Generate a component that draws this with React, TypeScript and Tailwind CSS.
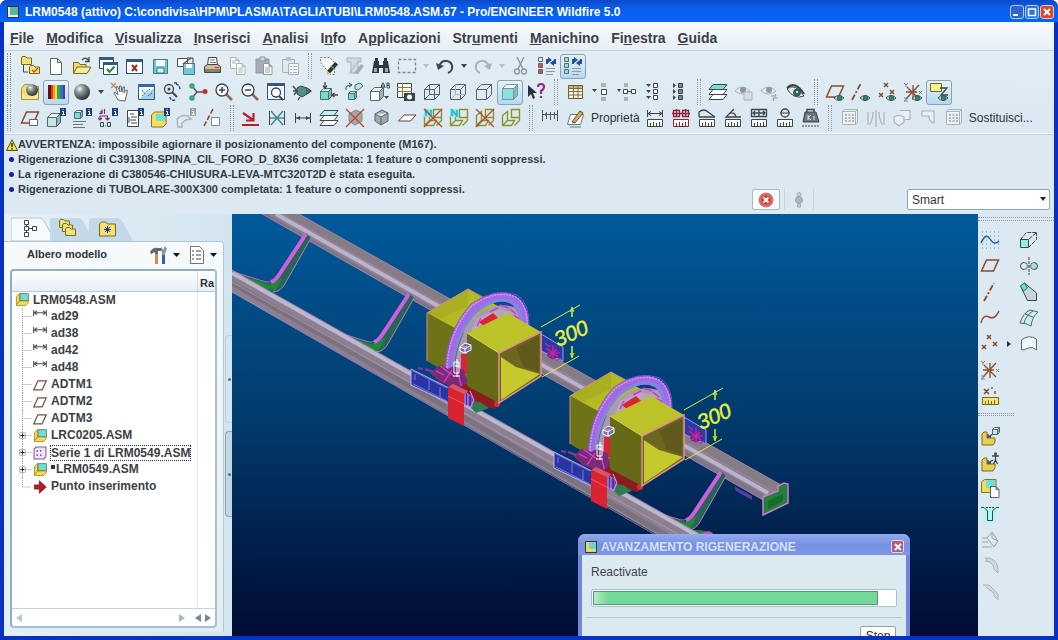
import type { ReactNode } from "react";

const K = "#3c464c";
const G = "#a9b3b8";
const T = "#6fe0d8";

type LineProps = { d: string; c?: string; f?: string; w?: number; dash?: string };
const L = ({ d, c = K, f = "none", w = 1, dash }: LineProps) => (
  <path d={d} stroke={c} fill={f} strokeWidth={w} strokeDasharray={dash} />
);

const Cube = ({ x, y, s, c = "#56686e", f = T, t = "#e4fbf9" }: { x: number; y: number; s: number; c?: string; f?: string; t?: string }) => {
  const o = Math.round(s / 2.5);
  return (
    <g stroke={c} transform={`translate(${x + 0.5} ${y + 0.5})`}>
      <path d={`M0 ${o}L${o} 0H${s + o}L${s} ${o}Z`} fill={t} />
      <path d={`M${s} ${o}L${s + o} 0V${s}L${s} ${s + o}Z`} fill="#8fb6bb" />
      <path d={`M0 ${o}H${s}V${s + o}H0Z`} fill={f} />
    </g>
  );
};
const Info = ({ c = "#1c3f78" }: { c?: string }) => (
  <g>
    <path d="M14 0h6v8h-6z" fill={c} />
    <path d="M17 1v1M16 3.500h1.500V7M16 6.500h3" stroke="#fff" fill="none" />
  </g>
);
const Eye = ({ c = "#3a5a50", i = "#2b8a74" }: { c?: string; i?: string }) => (
  <g>
    <path d="M9 16q5-5 10 0q-5 5-10 0z" fill="#dfe9e4" stroke={c} />
    <circle cx="14.5" cy="16" r="2.4" fill={i} stroke={c} />
  </g>
);
const Ruler = ({ c = K }: { c?: string }) => (
  <g stroke={c}>
    <path d="M2.500 11.500h15v7h-15z" fill="#fbfbf4" />
    <path d="M5.500 18v-3M8.500 18v-4M11.500 18v-3M14.500 18v-4" />
  </g>
);
const Folder = ({ x, y }: { x: number; y: number }) => (
  <path transform={`translate(${x} ${y})`} d="M.5 2l1-1.500h3L6 2h4.500v6.500H.5z" fill="#f3e27a" stroke="#7a6a1c" />
);
const Asm = () => (
  <g>
    <path d="M2 5l4-4h13v13l-4 4H2z" fill="#f6d94e" stroke="#8a7420" />
    <path d="M7 1h12v10H7z" fill={T} stroke="#4a8a80" />
    <path d="M7 1v10l-5 6M7 11h12" stroke="#8a7420" fill="none" />
  </g>
);
const Lens = ({ children }: { children?: ReactNode }) => (
  <g>
    <path d="M12 12l6 6" stroke="#8b6a5a" strokeWidth="2.500" />
    <circle cx="8" cy="8" r="6" fill="#f4f9fb" stroke={K} strokeWidth="1.300" />
    {children}
  </g>
);
const WireBox = ({ hidden, solid }: { hidden?: boolean; solid?: boolean }) => (
  <g fill="none" stroke="#566067">
    <path d="M2.500 7.500h10v10h-10zM2.500 7.500l5-5h10v10l-5 5M12.500 7.500l5-5" />
    {!solid && <path d="M7.500 2.500v10h10M7.500 12.500l-5 5" stroke={hidden ? G : "#566067"} />}
  </g>
);
const Frame3 = ({ n, x }: { n?: boolean; x?: boolean }) => (
  <g fill="none">
    <path d="M1.500 7.500l5-4v9h7l-3 5h-9zM6.500 12.500l-5 5M10.500 1.500h8v8h-8zM18.500 9.500v3l-5 5" stroke="#8a942c" strokeWidth="1.400" />
    {n && <path d="M1 1h9v8H1z" fill="#7fe9f2" />}
    {n && <path d="M3 8V2l5 6V2" stroke="#1fb4cc" strokeWidth="1.500" />}
    {x && <path d="M1 1l18 18M19 1L1 19" stroke="#c4432c" strokeWidth="1.300" />}
  </g>
);
const Plane = ({ c = "#8a4b2a" }: { c?: string }) => <path d="M1.500 15L6.500 4h12l-5 11z" fill="none" stroke={c} strokeWidth="1.500" />;
const Axis = () => <path d="M4 19L14 1" stroke="#8a4b2a" strokeWidth="1.800" strokeDasharray="6 2 2 2" />;
const Crosses = () => <path d="M7 1l4 4M11 1L7 5M2 11l4 4M6 11l-4 4M13 8l4 4M17 8l-4 4" stroke="#8a4b2a" strokeWidth="1.500" />;
const Csys = () => (
  <g fill="none">
    <path d="M10 3v15M3 17L16 3M4 5l12 12M3 10h11" stroke="#8a4b2a" strokeWidth="1.300" />
    <path d="M1 1l2 2 2-2M3 3v2M16 9l3 3M19 9l-3 3M1 16h4l-4 3h4" stroke="#7a8388" />
  </g>
);
const Check = ({ x, y }: { x: number; y: number }) => (
  <path d={`M${x} ${y}l2.500 3 5-5.500`} stroke="#2c8a3c" strokeWidth="2" fill="none" />
);
const Leaves = ({ c = K, f = T }: { c?: string; f?: string }) => (
  <g stroke={c}>
    <path d="M1 17.500l4-5h14l-4 5z" fill="#fff" />
    <path d="M1 12.500l4-5h14l-4 5z" fill="#fff" />
    <path d="M1 7.500l4-5h14l-4 5z" fill={f} />
  </g>
);
const Grid3 = () => (
  <g>
    <path d="M2.500 3.500h13v13h-13zM15.500 3.500l2-2v13l-2 2M2.500 3.500l2-2h13" fill="#eef3f6" stroke={G} />
    <path d="M5 7h9M5 10h9M5 13h9" stroke={G} strokeDasharray="2 1.500" strokeWidth="2" />
  </g>
);
const Refresh = ({ boxes }: { boxes: [string, string, string] }) => (
  <g>
    <path d="M1.500 1.500h4v4h-4z" fill={boxes[0]} stroke="#5a6a70" />
    <path d="M1.500 7.500h4v4h-4z" fill={boxes[1]} stroke="#5a6a70" />
    <path d="M1.500 13.500h4v4h-4z" fill={boxes[2]} stroke="#5a6a70" />
    <path d="M10 8V4h2M18 3v4h-2" stroke="#214f9c" strokeWidth="2" fill="none" />
    <path d="M11 1l4 3-4 3zM17 4l-4 3 4 3z" fill="#214f9c" />
    <path d="M9 12.500h9M9 15.500h9M9 18.500h7" stroke="#8d979c" />
  </g>
);
const LBlock = () => (
  <path d="M2 8l2-2h3v6h8v4l-2 3H2z" fill="#e9cf52" stroke="#7a6a1c" />
);
const Sheet = ({ x = 0, y = 0, c = "#5c666c" }: { x?: number; y?: number; c?: string }) => (
  <path transform={`translate(${x} ${y})`} d="M.5.5H6l3 3v8H.5zM6 .5v3h3" fill="#fff" stroke={c} />
);

const icons: Record<string, ReactNode> = {
  workdir: (<><Folder x={1} y={0} /><L d="M3.500 9v7H8" /><Folder x={9} y={9} /><path d="M12 14l2 2 4-4" stroke="#c2502c" strokeWidth="1.500" fill="none" /></>),
  new: <path d="M4.500 2.500h7l4 4v12h-11zM11.500 2.500v4h4" fill="#fff" stroke="#5c666c" />,
  open: (<><path d="M1.500 17V6.500h5l1.500 2h6V11" fill="#f0dc74" stroke="#7a6a1c" /><path d="M1.500 17.500L5 11h14l-4 6.500z" fill="#f7ea9c" stroke="#7a6a1c" /><L d="M10 4q4-4 7 1M17 1v4.500h-4" w={1.300} /></>),
  winCheck: (<><path d="M1.500 1.500h14v11h-14z" fill="#fff" stroke="#2c4a6c" /><path d="M1 1h15v3H1z" fill="#35597f" /><path d="M5.500 6.500h14v12h-14z" fill="#fff" stroke="#2c4a6c" /><path d="M5 6h15v3H5z" fill="#35597f" /><Check x={9} y={13} /></>),
  winClose: (<><path d="M2.500 3.500h16v14h-16z" fill="#fff" stroke="#2c4a6c" /><path d="M2 3h17v3H2z" fill="#35597f" /><path d="M8 9l5 6M13 9l-5 6" stroke="#9c2c2c" strokeWidth="2" /></>),
  save: (<><path d="M3.500 3.500h14v14h-14z" fill="#73c9cb" stroke="#3f7d88" /><path d="M6 4h9v6H6z" fill="#f4fbfb" /><path d="M7 12h7v5H7z" fill="#dceef0" stroke="#3f7d88" /></>),
  saveCopy: (<><path d="M1.500 2.500h10v8h-10z" fill="#fff" stroke="#46525a" /><path d="M7.500 7.500h11v11h-11z" fill="#73c9cb" stroke="#3f7d88" /><path d="M10 8h6v4h-6z" fill="#fff" /><path d="M7 8l8-6" stroke="#a83434" strokeWidth="1.300" /><L d="M11 2h6v5" /></>),
  print: (<><path d="M6.500 1.500h8l1 8h-10z" fill="#fff" stroke={K} /><L d="M8 4h5M8 6.500h6" c="#778" /><path d="M2.500 10.500l3-2h10l3 2v6h-16z" fill="#cdbb9d" stroke={K} /><path d="M3 13h15v3H3z" fill="#8b7c68" /><path d="M13 11h4v1h-4z" fill="#d33" /></>),
  copy: (<><Sheet x={2} y={1} c={G} /><Sheet x={8} y={7} c={G} /><L d="M4 5h4M4 7h4M10 12h5M10 14h5M10 16h5" c={G} /></>),
  paste: (<><path d="M2 3h13v14H2z" fill="#a5afb3" stroke="#8d979c" /><path d="M6 1h5v4H6z" fill="#d3dadd" stroke="#8d979c" /><Sheet x={9} y={7} c="#8d979c" /><L d="M11 12h5M11 14h5M11 16h5" c="#9aa4a9" /></>),
  pasteSp: (<><path d="M2.500 3.500h12v13h-12z" fill="#e2e8eb" stroke={G} /><path d="M6 1h5v4H6z" fill="#b8c1c5" /><path d="M8.500 7.500h10v11h-10z" fill="#f4f7f8" stroke={G} /><L d="M10 10.500h2M13 10.500h4M10 13.500h2M13 13.500h4M10 16.500h2M13 16.500h4" c={G} /></>),
  regen: (<><path d="M1.500 1.500h9l5 5v12h-4l-10-12z" fill="#f7f9f4" stroke="#6b757a" strokeDasharray="2 1.500" /><path d="M8 15l8-9 3 2.500-8 9z" fill="#2d3336" /><path d="M8 14.500l4 3.500-4 1z" fill="#d3c94e" /><path d="M12 10l4 3.500" stroke="#4da46a" strokeWidth="1.500" /></>),
  regenMgr: (<><path d="M2 2h14v4h-3v11H6V6H2z" fill="#d4dbde" stroke={G} /><path d="M9 17l7-9 3 2-6 8z" fill="#a5afb3" /><L d="M4 18L14 4" c={G} /></>),
  find: (<><path d="M3 5h5v4h4V5h5l2 12h-7v-5H8v5H1z" fill="#30383d" /><path d="M4 2h3v3H4zM13 2h3v3h-3z" fill="#30383d" /><path d="M3 12h3v4H3zM14 12h3v4h-3z" fill="#8fb0ae" /></>),
  selectBox: <L d="M1.500 3.500h17v13h-17z" c="#7c888e" w={1.300} dash="3 2" />,
  undo: (<><path d="M4 11q2-7 8-6q6 1 5 8q-1 3-4 4" fill="none" stroke="#3f4a50" strokeWidth="2" /><path d="M1 7l2 7 6-4z" fill="#3f4a50" /></>),
  redo: (<><path d="M16 11q-2-7-8-6q-6 1-5 8q1 3 4 4" fill="none" stroke={G} strokeWidth="2" /><path d="M19 7l-2 7-6-4z" fill={G} /></>),
  cut: (<><path d="M6 1l6 12M13 1L7 13" stroke="#8d979c" strokeWidth="1.500" /><circle cx="6" cy="15.500" r="2.500" fill="none" stroke="#8d979c" strokeWidth="1.300" /><circle cx="13" cy="15.500" r="2.500" fill="none" stroke="#8d979c" strokeWidth="1.300" /></>),
  tagA: <Refresh boxes={["#f3f3f3", "#d85050", "#d85050"]} />,
  tagB: <Refresh boxes={["#8fe0da", "#8fe0da", "#8fe0da"]} />,
  render: (<><path d="M1.500 17.500v-11l3-4h5l2 2h7v13z" fill="#f1de6c" stroke="#a8923c" /><circle cx="12" cy="8" r="6" fill="url(#ball)" /><path d="M2 12q6 4 16 1v4H2z" fill="#f6e98f" /></>),
  spectrum: (<><path d="M2 3h3v14H2z" fill="#5b1512" /><path d="M5 3h2v14H5z" fill="#e6392b" /><path d="M7 3h2v14H7z" fill="#f59b1f" /><path d="M9 3h2v14H9z" fill="#f0e22c" /><path d="M11 3h3v14h-3z" fill="#36a648" /><path d="M14 3h3v14h-3z" fill="#2378c8" /><path d="M17 3h2v14h-2z" fill="#65319a" /></>),
  ball: <circle cx="10" cy="10" r="8" fill="url(#ball)" />,
  hand: (<><path d="M1 1l5 5M6 1L1 6" stroke="#c78d52" strokeWidth="1.300" /><path d="M8 18L4 11l1-1 3 3L6 5l1.500-.5L10 10l-.5-6H11l1 6 1-5h1.500L14 11l2-3 1.500.5L16 15l-1 4z" fill="#fff" stroke="#59646a" /></>),
  orient: (<><path d="M2.500 2.500h16v15h-16z" fill="#f3f9fd" stroke="#2c5a8c" /><path d="M2 2h17v3H2z" fill="#3468a0" /><path d="M3 17L18 6v11z" fill="#a9cfe8" /><L d="M6 14l8-7M6 8l3 4M12 14l4-3" c="#2c5a8c" dash="2 1" /></>),
  layerFind: (<><circle cx="7" cy="7" r="4.500" fill="none" stroke={K} strokeWidth="1.300" /><circle cx="7" cy="7" r="1.500" fill={K} /><path d="M10 10l5 5" stroke={K} strokeWidth="2" /><path d="M14 2q4 1 4 6M8 15q0 4 6 3M12 1h4" stroke="#2a4fa8" fill="none" strokeWidth="1.500" strokeDasharray="3 1" /></>),
  nodes: (<><path d="M4 4l5 6 8 0M9 10l-5 6" stroke="#4b5a60" strokeWidth="1.500" fill="none" /><circle cx="4" cy="4" r="2.800" fill="#3aa67c" /><circle cx="4" cy="16" r="2.800" fill="#3aa67c" /><circle cx="17" cy="9.500" r="2.500" fill="#c43030" /></>),
  zoomIn: <Lens><path d="M5 8h6M8 5v6" stroke={K} strokeWidth="1.500" /></Lens>,
  zoomOut: <Lens><path d="M5 8h6" stroke={K} strokeWidth="1.500" /></Lens>,
  refit: (<><path d="M1.500 1.500h17v16h-17z" fill="#f3f7f9" stroke="#3a5a80" /><path d="M1 1h18v3H1z" fill="#35597f" /><circle cx="10" cy="10.500" r="4.500" fill="#fff" stroke={K} strokeWidth="1.300" /><path d="M13 14l4 4" stroke={K} strokeWidth="2" /></>),
  reorient: (<><path d="M1 9h18" stroke={K} strokeWidth="1.500" /><path d="M5 6l4-2 6 2v6l-5 3-5-3z" fill="#4f8f88" stroke={K} /><path d="M1 4l4 5-3 4M15 6l4 3-4 3M8 15l-2 3" stroke={K} fill="none" strokeWidth="1.300" /></>),
  saved: (<><Cube x={2} y={6} s={8} /><path d="M7 0v6M5 3.500l2 3 2-3M20 13h-6M16.500 11l-3 2 3 2" stroke={K} fill="none" strokeWidth="1.300" /></>),
  rotate: (<><Cube x={4} y={9} s={6} /><path d="M2 8q-1-5 5-5M5 1l3 2-3 2" stroke={K} fill="none" /><path d="M11 3l5-2 3 3-5 4-3-1z" fill="#b4ecdf" stroke="#56686e" /></>),
  named: (<><Cube x={0} y={5} s={9} f="#fff" c="#5c666c" /><path d="M11 6l1.500-5h1L15 6M11.500 4h3M17 1v5M17 1h2v2.500h-2M19.500 3.500V6h-2" stroke={K} fill="none" /><path d="M14 14h5l-2.500 3z" fill={K} /></>),
  viewMgr: (<><path d="M1.500 1.500h14v14h-14z" fill="#fbf8ec" stroke={K} /><L d="M1 5.500h15M1 9.500h15M6.500 1v14" c="#857a5c" /><path d="M8 11h11v8H8z" fill="#39434a" /><circle cx="13.500" cy="15" r="2.500" fill="#fff" /></>),
  wire: <WireBox />,
  hiddenLn: <WireBox hidden />,
  noHidden: <WireBox solid />,
  shaded: <Cube x={2} y={2} s={11} c="#6a9aa0" f="#8edfdf" t="#fff" />,
  help: (<><path d="M2 3v12l3-3 2 5 2-1-2-5h4z" fill="#2a3036" /><path d="M12 5q0-3 3-3t3 3q0 2-3 4v3M15 14v2" stroke="#92278f" strokeWidth="2.200" fill="none" /></>),
  table: (<><path d="M3.500 3.500h14v13h-14z" fill="#fff8e0" stroke="#6b5a38" /><path d="M4 4h13v2H4z" fill="#d3b36a" /><L d="M3 6.500h15M3 9.500h15M3 13h15M8.500 4v12M13 4v12" c="#7c6c4c" /></>),
  t1: (<><path d="M1 7h5l-2.500 3z" fill={K} /><path d="M10 1h5v4h-5zM10 15h5v4h-5z" fill="#a9b3b8" /><path d="M10.500 7.500h5v5h-5z" fill="#fff" stroke={K} /></>),
  t2: (<><path d="M0 7h4L2 10z" fill={K} /><path d="M7 1h4v4H7zM7 15h4v4H7z" fill="#a9b3b8" /><path d="M6.500 7.500h4v4h-4zM14.500 7.500h4v4h-4zM11 9.500h3" fill="#fff" stroke={K} /></>),
  t3: (<><path d="M3 2h5L5.500 5zM3 8h5l-2.500 3zM3 14h5l-2.500 3z" fill={K} /><path d="M10.500 1.500h4v4h-4zM10.500 7.500h4v4h-4zM10.500 13.500h4v4h-4z" fill="#fff" stroke={K} /></>),
  t4: (<><path d="M4 1v5l3-2.500zM4 7v5l3-2.500zM4 13v5l3-2.500z" fill={K} /><path d="M9.500 1.500h4v4h-4zM9.500 7.500h4v4h-4zM9.500 13.500h4v4h-4z" fill="#7c868b" stroke={K} /></>),
  layers: <Leaves />,
  eyeSave: (<><path d="M1 9q7-8 15 0q-8 6-15 0z" fill="#e4eaed" stroke={G} /><circle cx="9" cy="8" r="3" fill="#8d979c" /><path d="M10 10h8v8h-8z" fill="#d7dee1" stroke={G} /></>),
  eyeReset: (<><path d="M1 9q7-8 15 0q-8 6-15 0z" fill="#e4eaed" stroke={G} /><circle cx="9" cy="8" r="3" fill="#8d979c" /><path d="M11 14h5l-1-2M18 16h-5l1 3" fill="none" stroke="#8d979c" /></>),
  eye: (<><path d="M1 7q8-7 17 7q-10 4-17-7z" fill="#e9efec" stroke={K} /><path d="M1 6q8-8 17 6" fill="none" stroke={K} strokeWidth="2.200" /><circle cx="11" cy="10.500" r="3.500" fill="#2a6b5f" stroke={K} /><circle cx="11" cy="10" r="1" fill="#dff" /></>),
  planeEye: (<><Plane /><Eye /></>),
  axisEye: (<><path d="M1 18L10 1" stroke="#8a4b2a" strokeWidth="1.800" strokeDasharray="6 2 2 2" /><Eye /></>),
  pointEye: (<><Crosses /><Eye /></>),
  csysEye: (<><Csys /><Eye /></>),
  noteEye: (<><path d="M1.500 1.500h11v8h-11z" fill="#f9f28c" stroke="#6b6a2c" /><path d="M11 6h7l-6 7h7" fill="none" stroke={K} strokeWidth="1.300" /><Eye /></>),
  planeInfo: (<><Plane /><path d="M9.500 11.500h8v6h-8z" fill="#fff" stroke="#5c666c" /></>),
  featInfo: (<><Cube x={1} y={5} s={9} f="#c9e4e6" /><Info /></>),
  bomInfo: (<><Cube x={2} y={2} s={6} /><L d="M1 13.500h13M1 16.500h10M1 19.500h12" c="#6b757a" /><Info /></>),
  dimInfo: (<><path d="M3 3v3M1 5.500h3v-4M6.500 1v5M2 8v4M0 10l2 2 2-2M9.500 8v4M7.500 10l2 2 2-2M2 8h8" stroke="#7a2a6a" fill="none" strokeWidth="1.200" /><path d="M2.500 14.500h3v4h-3zM9.500 14.500h3v4h-3zM7.500 17.500v1" stroke={K} fill="none" /><Info /></>),
  docInfo: (<><path d="M3.500 2.500h11v16h-11z" fill="#fff" stroke={K} /><L d="M6 6h4M7 9h6M6 12h6M7 15h6M5 9v6" /><Info /></>),
  asmInfo: (<><path d="M1.500 7l3-3H16v12l-3 3H1.500z" fill="#f4df5c" stroke="#8a7420" /><path d="M6 6h9v7H6z" fill={T} /><Info /></>),
  pipeInfo: (<><path d="M1 11q5-5 11-3l3 3-5 1-4 3v4H2z" fill="#e3e8ea" stroke={G} strokeWidth="1.500" /><Info c="#98a3a9" /></>),
  axisDoc: (<><path d="M2 18L11 1" stroke="#8a4b2a" strokeWidth="1.600" strokeDasharray="5 2" /><path d="M9.500 9.500h8v8h-8z" fill="#fff" stroke="#7c868b" /></>),
  redV: (<><path d="M2 5l10 7M12.500 5v7.500H5" stroke="#b3202c" fill="none" strokeWidth="2.200" /><path d="M1 17h17" stroke="#b3202c" strokeWidth="2" /></>),
  dimX: (<><path d="M2.500 3v14M17.500 3v14M3 10h14" stroke={K} /><path d="M4 3l12 14M16 3L4 17" stroke="#2c8a80" strokeWidth="1.300" /></>),
  dim: (<><path d="M2.500 5v10M17.500 5v10M3 10h14" stroke={K} fill="none" /><path d="M3 10l4-2v4zM17 10l-4-2v4z" fill={K} /></>),
  layerW: <Leaves f="#bff0ec" />,
  boxX: (<><path d="M4 6l7-4 6 3v8l-7 4-6-4z" fill="#a2a9ac" stroke="#7c868b" /><path d="M1 1l18 18M19 1L1 19" stroke="#c4432c" strokeWidth="1.300" /></>),
  solid: <path d="M4 6l7-4 6 3v8l-7 4-6-4z M4 6l6 3 7-4M10 9v8" fill="#a2a9ac" stroke="#59646a" />,
  planeW: <path d="M1.500 13L7 7h12l-5.500 6z" fill="#fff" stroke="#7a3a3a" />,
  fNX: <Frame3 n x />,
  fN: <Frame3 n />,
  fX: <Frame3 x />,
  f: <Frame3 />,
  dims: (<><path d="M2.500 2v11M17.500 2v11M10.500 4v8M3 6.500h15M6.500 4v7M14.500 4v7" stroke="#4c575d" fill="none" /><path d="M4 6.500l3-2v4z" fill="#4c575d" /></>),
  sketchEdit: (<><path d="M1.500 16.500l3-10h13l-3 10z" fill="#fff" stroke="#6b757a" /><path d="M6 14l8-11 3 2-8 10z" fill="#d9b05a" stroke="#5c4a2a" /><L d="M4 19h11" c="#4a8a80" /></>),
  mDist: (<><Ruler /><path d="M2.500 2v7M17.500 2v7M3 5.500h14M6 3.500l-3 2 3 2M14 3.500l3 2-3 2" stroke={K} fill="none" /></>),
  mDist2: (<><Ruler c="#8c2438" /><path d="M2.500 2.500h6v6h-6zM11.500 2.500h6v6h-6zM1 5.500h18M5.500 1v8M14.500 1v8" stroke="#8c2438" fill="none" strokeWidth="1.300" /></>),
  mCurve: (<><Ruler /><path d="M2 9V4q5-4 9 0l7 5M2 9h16" stroke={K} fill="none" strokeWidth="1.300" /></>),
  mAngle: (<><Ruler /><path d="M11 1L3 9h15M7 5q5-1 6 4" stroke={K} fill="none" strokeWidth="1.300" /></>),
  mArea: (<><Ruler /><path d="M2.500 1.500h15v7h-15zM10 2v6M4 5h12M6 3L4 5l2 2M14 3l2 2-2 2" stroke={K} fill="none" strokeWidth="1.300" /></>),
  mDiam: (<><Ruler /><circle cx="10" cy="5" r="4" fill="none" stroke={K} strokeWidth="1.300" /><L d="M5 5h10" /></>),
  mass: (<><path d="M6 5V1.500h7V5" stroke={K} fill="none" strokeWidth="1.500" /><path d="M4 4h11l3 10H2z" fill="#66757b" stroke={K} /><path d="M7 7v5M10 7L7 9.500l3 2.500M13 8v4" stroke="#e8eef0" fill="none" /><L d="M2 19v-2M5 19v-2M8 19v-2M11 19v-2M14 19v-2M17 19v-2" /></>),
  pattern: <Grid3 />,
  mirror: <path d="M2 4v12h2q3-5 3-12M18 4v12h-2q-3-5-3-12M10 2v17" fill="none" stroke={G} strokeWidth="1.200" />,
  merge: <path d="M8 2.500h10v9h-5M2 9q4-3 10 0v5l-5 4-5-4z" fill="#e9eff2" stroke={G} strokeWidth="1.200" />,
  trim: <path d="M4 3h12v12q-5-1-5-7H4z" fill="#e9eff2" stroke={G} strokeWidth="1.200" />,
  sketch: (<><path d="M2 2h17M2 6h17M2 10h17M2 14h17M2 18h17" stroke="#5f86c4" strokeDasharray="1 3" /><path d="M1 13q5-11 9-4t9 2" fill="none" stroke="#1f5f9c" strokeWidth="1.500" /></>),
  plane: <Plane />,
  axis: <Axis />,
  curve: <path d="M1 15q2-9 8-6t10-6" fill="none" stroke="#8a4b3a" strokeWidth="1.500" />,
  points: <Crosses />,
  csys: <Csys />,
  measure: (<><path d="M4 3l5 5M9 3L4 8M12 1v2M15 5v3" stroke="#8a4b2a" strokeWidth="1.500" /><path d="M2.500 11.500h16v7h-16z" fill="#f2e478" stroke="#7a6a1c" /><path d="M5.500 18v-3M8.500 18v-4M11.500 18v-3M14.500 18v-4" stroke="#7a6a1c" /></>),
  extrude: (<><path d="M1.500 9.500h8v8h-8z" fill="#8ff0e4" stroke={K} /><path d="M1.500 9.500l6-7h10l-8 7M9.500 17.500l8-8v-7" fill="none" stroke={K} strokeDasharray="4 1" /></>),
  revolve: (<><circle cx="5" cy="10" r="3.500" fill="none" stroke={K} /><circle cx="15" cy="10" r="3.500" fill="#a8ded8" stroke={K} /><path d="M5 6.500l10 7M5 13.500l10-7" stroke={G} /><L d="M10 1v18" dash="3 1" /></>),
  sweep: (<><path d="M1.500 4l4-3 12 10v7.500h-9z" fill="#c9d4d8" stroke={K} /><path d="M1.500 4l4-3 3 5-4 3z" fill="#6fdcc4" stroke="#2c7a6a" /></>),
  blend: (<><path d="M1 15Q4 5 11 2l8 2q-6 5-7 14-5-3-11-3z" fill="#cdeeea" stroke="#4a6a6a" /><path d="M6 6l8 3M5 15q2-8 9-12" fill="none" stroke="#4a6a6a" /></>),
  boundary: <path d="M2.500 16V6q7-6 15-1v11q-4-4-8-2t-7 2z" fill="#eef8f8" stroke="#5c6a70" />,
  assemble: (<><LBlock /><path d="M13 8L8 11M8 8v3h3" stroke={K} fill="none" strokeWidth="1.300" /><Cube x={12} y={1} s={5} f="#bfeef0" /></>),
  manikin: (<><LBlock /><path d="M13 8L8 11M8 8v3h3M15.500 3v6M12 4h7M15.500 8l-2 4M15.500 8l2 4" stroke={K} fill="none" strokeWidth="1.300" /><circle cx="15.500" cy="1.800" r="1.500" fill={K} /></>),
  create: (<><path d="M1.500 4l3-2.500H16v9l-3 4H1.500z" fill="#f0dc5c" stroke="#8a7420" /><path d="M6 2h9v8H6z" fill={T} /><Sheet x={10} y={8} /></>),
  pipe: (<><path d="M1 2h18v5h-3v12H4V7H1z" fill="#b4f5f5" /><path d="M6 3.500h8" stroke={K} strokeDasharray="2 1" /><path d="M1 3.500h3L7.500 7v9.500h5V7L16 3.500h3" fill="none" stroke={K} /></>),
  chamferBox: <path d="M2 8h5l5-6 6 9-4 6-7-9M2 17h10M2 12h6M12 2v6l6 3" fill="none" stroke="#9aa4a9" />,
  round: <path d="M5 2q11-1 13 10v5l-4-4Q13 5 5 5M5 2l6 5" fill="#d3dadd" stroke={G} />,
  chamfer: <path d="M3 3h6l9 9v6l-4-4V11L6 5" fill="#d3dadd" stroke={G} />,
};

const labels: Record<string, string> = { find: "Trova", save: "Salva", print: "Stampa", open: "Apri", new: "Nuovo", undo: "Annulla", redo: "Ripeti", cut: "Taglia", copy: "Copia", paste: "Incolla" };

const Icon = ({ name }: { name: string }) => (
  <svg viewBox="0 0 20 20" className="size-5" aria-hidden="true">{icons[name]}</svg>
);

const pressed = new Set(["spectrum", "shaded", "noteEye", "tagB"]);

const Handle = () => <span className="h-full w-1 shrink-0 border-x border-dotted border-[#8798a4]" />;

const Tool = ({ name }: { name: string }) => {
  if (name === "|") return <span className="flex h-full w-[13px] shrink-0 items-center justify-center"><Handle /></span>;
  if (name === "v" || name === "w")
    return (
      <button aria-label="Altre opzioni" className="flex h-6 w-3 shrink-0 items-center justify-center">
        <svg viewBox="0 0 6 4" className="h-1 w-1.5"><path d="M0 0h6L3 4z" fill={name === "v" ? K : "#b4bfc6"} /></svg>
      </button>
    );
  if (name.startsWith("#")) return <button className="shrink-0 px-0.5 text-[12px] text-[#2b3238]">{name.slice(1)}</button>;
  return (
    <button
      aria-label={labels[name] ?? name}
      className={
        pressed.has(name)
          ? "flex h-[25px] w-[26px] shrink-0 items-center justify-center rounded-[3px] border border-[#8aa3b4] bg-linear-to-b from-[#e8f1f7] to-[#b5d9f1]"
          : "flex h-[25px] w-[26px] shrink-0 items-center justify-center"
      }
    >
      <Icon name={name} />
    </button>
  );
};

const rows = [
  "workdir new open winCheck winClose save saveCopy print copy paste pasteSp | regen regenMgr find selectBox w undo v redo w cut tagA tagB",
  "render spectrum ball v hand orient layerFind nodes zoomIn zoomOut refit reorient saved rotate named viewMgr wire hiddenLn noHidden shaded help | table t1 t2 t3 t4 | layers eyeSave eyeReset eye | planeEye axisEye pointEye csysEye noteEye",
  "planeInfo featInfo bomInfo dimInfo docInfo asmInfo pipeInfo axisDoc | redV dimX dim layerW boxX solid planeW fNX fN fX f | dims sketchEdit #Proprietà mDist mDist2 mCurve mAngle mArea mDiam mass | pattern mirror merge trim pattern #Sostituisci...",
];

const menus: [string, string, string][] = [
  ["", "F", "ile"], ["", "M", "odifica"], ["", "V", "isualizza"], ["", "I", "nserisci"], ["", "A", "nalisi"], ["I", "n", "fo"],
  ["A", "p", "plicazioni"], ["Str", "u", "menti"], ["", "M", "anichino"], ["Fi", "n", "estra"], ["", "G", "uida"],
];

const messages = [
  "Rigenerazione di C391308-SPINA_CIL_FORO_D_8X36 completata: 1 feature o componenti soppressi.",
  "La rigenerazione di C380546-CHIUSURA-LEVA-MTC320T2D è stata eseguita.",
  "Rigenerazione di TUBOLARE-300X300 completata: 1 feature o componenti soppressi.",
];

type Node = { label: string; kind: "dim" | "plane" | "asm" | "series" | "insert"; open?: boolean; selected?: boolean; mark?: boolean };
const nodes: Node[] = [
  { label: "ad29", kind: "dim" }, { label: "ad38", kind: "dim" }, { label: "ad42", kind: "dim" }, { label: "ad48", kind: "dim" },
  { label: "ADTM1", kind: "plane" }, { label: "ADTM2", kind: "plane" }, { label: "ADTM3", kind: "plane" },
  { label: "LRC0205.ASM", kind: "asm", open: true },
  { label: "Serie 1 di LRM0549.ASM", kind: "series", open: true, selected: true },
  { label: "LRM0549.ASM", kind: "asm", open: true, mark: true },
  { label: "Punto inserimento", kind: "insert" },
];

const NodeIcon = ({ kind }: { kind: Node["kind"] }) => (
  <svg viewBox="0 0 20 20" className="size-3.5 shrink-0">
    {kind === "dim" && <path d="M1 0v9M19 0v9M1 4h18M6 1L2 4l4 3M14 1l4 3-4 3" fill="none" stroke="#4c4c4c" strokeWidth="1.500" />}
    {kind === "plane" && <path d="M1 17L7 4h12l-6 13z" fill="none" stroke="#7a5038" strokeWidth="1.800" />}
    {kind === "asm" && <Asm />}
    {kind === "series" && <><path d="M1.500 4l3-2.500h14V15l-3 3.500h-14z" fill="#f1e4f7" stroke="#7d5a94" strokeWidth="1.500" /><path d="M5 7h2M10 7h2M5 13h2M10 13h2" stroke="#4a2c66" strokeWidth="2" /></>}
    {kind === "insert" && <path d="M2 7h7V1l10 9-10 9v-6H2z" fill="#b51d22" stroke="#7a1014" />}
  </svg>
);

const Tree = () => (
  <ul className="text-[12px] font-bold leading-[17px] text-[#3a3f44]">
    <li className="flex h-4 items-center gap-1 pl-[3px]">
      <NodeIcon kind="asm" />LRM0548.ASM
    </li>
    {nodes.map((n, i) => (
      <li key={n.label} className="flex h-[17px] items-center pl-1">
        <svg viewBox="0 0 17 17" className="h-[17px] w-[17px] shrink-0">
          <path d={i === nodes.length - 1 ? "M6.500 0v9h9" : "M6.500 0v17M6.500 8.500h9"} fill="none" stroke="#9a9a9a" strokeDasharray="1 1" />
          {n.open && <><rect x="3.500" y="5.500" width="6" height="6" rx="1" fill="#eef2f4" stroke="#aab4ba" /><path d="M4.500 8.500h4M6.500 6.500v4" stroke="#222" /></>}
        </svg>
        <NodeIcon kind={n.kind} />
        <span className={n.selected ? "ml-[3px] whitespace-nowrap border border-dotted border-[#333] leading-[14px]" : "ml-1 whitespace-nowrap"}>
          {n.mark && <span className="mr-px inline-block size-1 -translate-y-1 bg-[#333]" />}
          {n.label}
        </span>
      </li>
    ))}
  </ul>
);

const Bracket = ({ x, y }: { x: number; y: number }) => (
  <g transform={`translate(${x} ${y})`}>
    <path d="M234 272L268 283Q274 284 279 276L306 233L311 238L286 282Q281 292 273 292L262 287Z" fill="#2a6458" />
    <path d="M240 275L270 285L283 277L275 291L262 287Z" fill="#1d8a36" />
    <path d="M234 272L266 282Q273 283 278 275L306 233" fill="none" stroke="#b06acb" strokeWidth="1" />
    <path d="M271 282Q275 281 279 275L306 234" fill="none" stroke="#cf5fdc" strokeWidth="4" />
    <path d="M311 238L286 282Q281 292 273 292" fill="none" stroke="#a884b8" strokeWidth="1" />
  </g>
);

const Station = ({ x, y }: { x: number; y: number }) => (
  <g transform={`translate(${x} ${y})`}>
    <path d="M427 313L468 289L510 313L470 338Z" fill="#b4ba24" />
    <path d="M468 289V306L440 319L427 313Z" fill="#a2a820" opacity=".6" />
    <path d="M427 313L470 336V386L427 361Z" fill="#6f7318" />
    <path d="M427 361V313L468 289L492 302" fill="none" stroke="#d48a8c" strokeWidth="1" />
    <path d="M541 334L563 347V361L541 351Z" fill="#2c3aa8" stroke="#9c9cf0" />
    <circle cx="553" cy="353" r="6" fill="#5b2a9c" />
    <path d="M546 348l12 9M548 358l9-9M553 345v15M547 353h13M545 343l5 4M556 361l5-3" stroke="#d0259a" strokeWidth="1.200" />
    <path d="M455 376Q455 335 478 314Q500 299 522 310V324L470 345L465 384Z" fill="#a79ab8" />
    <path d="M471 330l7-12 18-9 18 4-10 6-22 10z" fill="#b7a6bd" />
    <path d="M479 322l14-9 5 5-14 8z" fill="#dc2334" />
    <path d="M477 326l4-8M490 312l8-4M510 309l6 5M500 305l9 3M514 316l6 3" stroke="#d838c8" strokeWidth="1.500" />
    <path d="M450 383Q447 337 474 309Q496 291 513 300Q526 308 524 332" fill="none" stroke="#a468e4" strokeWidth="9" />
    <path d="M452 383Q450 338 477 311Q497 295 512 302Q523 309 522 330" fill="none" stroke="#7f86ea" strokeWidth="3" />
    <path d="M447 380Q445 335 472 306Q495 289 516 297Q528 305 527 328" fill="none" stroke="#c99af4" strokeWidth="1.500" strokeDasharray="2 1" />
    <path d="M445 378Q444 334 471 304Q495 287 517 295Q530 303 529 328" fill="none" stroke="#8b4fd2" />
    <path d="M461 354h7v20h-7z" fill="#d8253a" />
    <path d="M430 373l10-8 8 4 6-3 10 4 4 12-8 8-20-8z" fill="#7c2a78" />
    <path d="M436 371l8 4M440 366l14 10M452 370l-8 12M458 374l4 14" stroke="#d04ad0" strokeWidth="1.200" />
    <path d="M458 388L468 383L501 402L495 409L462 400Z" fill="#8e1c1c" />
    <path d="M463 400L480 402L489 408L476 413Z" fill="#2b7d4e" />
    <circle cx="497" cy="404" r="3" fill="#d4303c" />
    <path d="M467 333L508 313L541 332L499 353Z" fill="#bcc328" />
    <path d="M467 333L499 353V403L467 386Z" fill="#666a16" />
    <path d="M499 353L541 332V376L499 403Z" fill="#6a6720" />
    <path d="M501 357L516 367L540 374L501 400Z" fill="#c5c92c" />
    <path d="M516 348L539 336V372L524 367Z" fill="#5f5a1c" />
    <path d="M499 353L541 332V376L499 403Z" fill="none" stroke="#e28f90" strokeWidth="1.500" />
    <path d="M467 333L499 353" stroke="#d7d95a" />
    <path d="M411 369L449 388V403L411 385Z" fill="#2a35a4" stroke="#b7b4f6" />
    <path d="M415 374v6M429 380v10M413 371l34 17M413 384l34 17M440 387v10" stroke="#8d8cf0" strokeWidth=".8" />
    <path d="M425 369l8 3M418 368l5 1" stroke="#8d32bb" strokeWidth="2" />
    <path d="M463 390l9 7v10l-9-3z" fill="#542aa8" stroke="#c74be0" />
    <path d="M465 393v12M468 394v12M470 391l4 9-4 8" stroke="#b9b4f6" fill="none" />
    <path d="M448 387L453 384L468 391L464 395Z" fill="#d9516a" />
    <path d="M448 387L464 394V426L448 418Z" fill="#d92330" />
    <path d="M448 396l16 8" stroke="#ef5a62" />
    <path d="M460 347l5-4 6 2v5l-6 3-5-2zM460 347l5 2 6-4M465 349v4" fill="#7a6dbb" stroke="#fff" />
    <path d="M454 362h5v11h-5zM457 359v18M453 376h7M455 366h4" fill="none" stroke="#fff" />
    <g stroke="#d9ee3c" fill="none">
      <path d="M541 327L580 305M542 377L579 356" />
      <path d="M572 307v10M572 346v12" strokeWidth="1.500" />
      <path d="M570 312l2-4 2 4M570 353l2 4 2-4" />
    </g>
    <text x="558" y="347" transform="rotate(-24 558 347)" fill="#e8f23a" stroke="#e8f23a" strokeWidth=".4" className="text-[21px] italic">300</text>
  </g>
);

const Scene = () => (
  <svg viewBox="232 214 746 422" preserveAspectRatio="xMinYMin slice" className="absolute inset-0 size-full" role="img" aria-label="Modello 3D">
    <path d="M262 214H299L783 486L763 500Z" fill="#8e8395" />
    <path d="M299 214L783 486L772 492L281 214Z" fill="#857d86" />
    <path d="M262 214L763 500V494L268 214Z" fill="#7d7689" />
    <path d="M276 214L768 493" stroke="#b9b3cc" strokeWidth="4" />
    <path d="M299 214L783 486M262 214L763 500M282 214L774 492" stroke="#c284b9" strokeWidth=".6" />
    <path d="M734 486l18 10v4l-16-9z" fill="#5a3fa0" />
    <path d="M763 497L778 491V486L784 483L788 484V503L763 515Z" fill="#22803a" stroke="#d27ad0" strokeWidth="1.500" />
    <path d="M768 501L783 494V501L768 509Z" fill="#1a6a2c" />
    <Bracket x={0} y={0} />
    <Bracket x={103} y={60} />
    <Bracket x={415} y={238} />
    <path d="M684 530h16l10 2-8 10h-20z" fill="#22803a" />
    <path d="M699 534l10-3 4 2-4 8h-10z" fill="#c04fc8" />
    <path d="M232 270L712 541H668L232 292Z" fill="#8b8191" />
    <path d="M232 286L668 539V533L232 280Z" fill="#7b7280" />
    <path d="M232 273L712 544" stroke="#bdb7cf" strokeWidth="4" />
    <path d="M232 282L690 541M232 270L712 541M232 292L666 541" stroke="#c795bd" strokeWidth=".7" fill="none" />
    <Station x={0} y={0} />
    <Station x={143} y={83} />
  </svg>
);

const Dialog = () => (
  <section role="dialog" aria-label="Avanzamento rigenerazione" className="absolute bottom-0 right-[68px] flex h-[102px] w-[332px] flex-col rounded-t-[7px] border-x-4 border-[#6f86dc] bg-[#dbe9f1]">
    <header className="-mx-1 flex h-[21px] shrink-0 items-center gap-1 rounded-t-[7px] bg-linear-to-b from-[#93abf0] via-[#7890e2] to-[#7d96e6] pl-[7px] pr-1.5 pt-1">
      <svg viewBox="0 0 12 12" className="size-3"><path d="M0 0h12v12H0z" fill="#33422c" /><path d="M1 1h10v10H1z" fill="#ecd95c" /><path d="M4 1h7v7H4z" fill="#6fd6cc" /></svg>
      <h2 className="text-[12px] font-bold leading-4 text-[#d5e0fb]">AVANZAMENTO RIGENERAZIONE</h2>
      <button aria-label="Chiudi" className="ml-auto flex size-[13px] items-center justify-center rounded-[2px] border border-[#e4d4e8] bg-[#b0607c]">
        <svg viewBox="0 0 8 8" className="size-2"><path d="M1 1l6 6M7 1L1 7" stroke="#fff" strokeWidth="1.800" /></svg>
      </button>
    </header>
    <div className="px-[9px] pt-2">
      <p className="text-[12px] leading-[18px] text-[#3b444a]">Reactivate</p>
      <div role="progressbar" aria-label="Reactivate" aria-valuenow={94} className="mt-2 h-[18px] rounded-[2px] border border-[#a9c3c9] bg-white p-px">
        <div className="h-full border border-[#4f9a72] bg-linear-to-r from-[#b5ecc8] via-[#74d898] via-5% to-[#74d898]" style={{ width: "94.5%" }} />
      </div>
    </div>
    <div className="mx-1 mt-[10px] flex h-[19px] shrink-0 justify-end overflow-hidden border-t border-[#b9c9d2] pr-1.5 pt-2">
      <button className="h-5 w-9 rounded-[2px] border border-[#8fa3ae] bg-white text-[12px] leading-4 text-[#333]">Stop</button>
    </div>
  </section>
);

const sideA = ["sketch", "plane", "axis", "curve", "points", "csys", "measure"];
const sideB = ["extrude", "revolve", "sweep", "blend", "boundary"];
const sideC = ["assemble", "manikin", "create", "pipe", "chamferBox", "round", "chamfer"];

const SideButton = ({ name }: { name: string }) => (
  <button aria-label={name} className="flex h-[26px] w-6 items-center justify-center"><Icon name={name} /></button>
);

const Arrow = ({ d, c }: { d: string; c: string }) => (
  <svg viewBox="0 0 6 8" className="h-2 w-1.5"><path d={d} fill={c} /></svg>
);

export default function App() {
  return (
    <div className="flex h-screen flex-col overflow-hidden rounded-t-[7px] bg-[#0831c4] font-['Liberation_Sans',Arial,sans-serif] text-[#2d353a]">
      <svg className="absolute size-0">
        <defs>
          <radialGradient id="ball" cx=".35" cy=".3" r=".75">
            <stop offset="0" stopColor="#f4f6f7" /><stop offset=".35" stopColor="#8b9498" /><stop offset="1" stopColor="#23292d" />
          </radialGradient>
        </defs>
      </svg>
      <header className="flex h-[22px] shrink-0 items-center bg-linear-to-b from-[#0a49c8] via-[#0b5be8] via-30% to-[#0566fb] pl-[7px] pr-1 pt-0.5">
        <svg viewBox="0 0 12 12" className="size-3"><path d="M0 0h12v12H0z" fill="#263a34" /><path d="M1 1h10v10H1z" fill="#e9efc8" /><path d="M3 1h8v8H3z" fill="#57b8a4" /></svg>
        <h1 className="ml-1.5 whitespace-nowrap text-[12px] font-bold leading-5 text-white">
          LRM0548 (attivo) C:\condivisa\HPM\PLASMA\TAGLIATUBI\LRM0548.ASM.67 - Pro/ENGINEER Wildfire 5.0
        </h1>
        <div className="ml-auto flex gap-px">
          <button aria-label="Riduci" className="size-3.5 rounded-[3px] border border-[#b9cdf6] bg-[#2f63d8]"><svg viewBox="0 0 12 12"><path d="M2 9h5" stroke="#fff" strokeWidth="2" /></svg></button>
          <button aria-label="Ingrandisci" className="size-3.5 rounded-[3px] border border-[#b9cdf6] bg-[#2f74e0]"><svg viewBox="0 0 12 12"><path d="M2.500 3h7v6.500h-7z" fill="none" stroke="#fff" strokeWidth="1.500" /></svg></button>
          <button aria-label="Chiudi finestra" className="size-3.5 rounded-[3px] border border-[#f0c8bf] bg-[#d8482c]"><svg viewBox="0 0 12 12"><path d="M3 3l6 6M9 3L3 9" stroke="#fff" strokeWidth="2" /></svg></button>
        </div>
      </header>

      <div className="mx-1 mb-1 flex min-h-0 flex-1 flex-col bg-[#dce9f2]">
        <nav className="flex h-[29px] shrink-0 items-center gap-[12px] border-b border-[#c3d2dc] bg-linear-to-b from-[#f8fbff] to-[#e6eff6] pb-px pl-1.5 pt-1">
          {menus.map(([a, b, c]) => (
            <button key={a + b + c} className="text-[14px] font-bold leading-5 text-[#3c4146]">{a}<span className="underline">{b}</span>{c}</button>
          ))}
        </nav>

        <div className="shrink-0 border-b border-[#f4f9fc] bg-linear-to-b from-[#e2edf4] to-[#dbe8f1] py-0.5">
          {rows.map((row, r) => (
            <div key={r} role="toolbar" className="flex h-[26px] items-center pl-[3px]">
              <span className="flex h-full w-2.5 shrink-0"><Handle /></span>
              {row.split(" ").map((n, i) => <Tool key={i} name={n} />)}
            </div>
          ))}
        </div>

        <div className="flex h-[80px] shrink-0 items-end justify-between border-t border-[#c3d2dc]">
          <ul className="self-start pt-[2px] text-[11px] font-bold leading-[15px] text-[#343c42]">
            <li className="flex items-center pl-[2px]">
              <svg viewBox="0 0 12 12" className="size-3"><path d="M6 .8L11.500 11.500H.5z" fill="#f6e63c" stroke="#55501c" /><path d="M6 4v4M6 9v1.500" stroke="#222" strokeWidth="1.500" /></svg>
              AVVERTENZA: impossibile agiornare il posizionamento del componente (M167).
            </li>
            {messages.map((m) => (
              <li key={m} className="flex items-center gap-1 pl-[5px]">
                <span className="size-[5px] rounded-full bg-[#1a1aa8]" />{m}
              </li>
            ))}
          </ul>
          <div className="flex items-center pb-1 pr-1">
            <button aria-label="Interrompi" className="flex h-[21px] w-7 items-center justify-center rounded-[2px] border border-[#a9bac5] bg-[#f7fafc]">
              <svg viewBox="0 0 16 16" className="size-4"><circle cx="8" cy="8" r="7" fill="#e0685c" stroke="#b07a78" /><circle cx="8" cy="8" r="4.500" fill="#cf3c32" /><path d="M5.500 5.500l5 5M10.500 5.500l-5 5" stroke="#fff" strokeWidth="2" /></svg>
            </button>
            <span className="ml-1 flex h-[21px] items-center border-x border-[#c6d5de] px-[9px]">
              <svg viewBox="0 0 9 16" className="h-4 w-2.5"><circle cx="4.500" cy="2.500" r="2" fill="#c4ced3" stroke="#a3aeb4" /><circle cx="4.500" cy="8" r="3.500" fill="#aeb9be" stroke="#98a3a9" /><path d="M3 12h3v3H3z" fill="#c4ced3" stroke="#a3aeb4" /></svg>
            </span>
            <label className="relative ml-[93px] flex">
              <span className="sr-only">Filtro</span>
              <select className="h-[21px] w-[143px] appearance-none rounded-[2px] border border-[#8ea6b4] bg-white py-0 pl-1 pr-4 text-[12px] leading-4 text-[#333]">
                <option>Smart</option>
              </select>
              <svg viewBox="0 0 6 4" className="pointer-events-none absolute right-1 top-2 h-1 w-1.5"><path d="M0 0h6L3 4z" fill="#222" /></svg>
            </label>
          </div>
        </div>

        <main className="flex min-h-0 flex-1">
          <aside className="flex w-[228px] shrink-0 bg-linear-to-r from-[#e6f0f7] to-[#d3e5ef]">
            <div className="flex min-w-0 flex-1 flex-col pb-1 pt-[3px]">
              <div className="flex h-6 shrink-0 pl-[7px]" role="tablist">
                {[0, 1, 2].map((t) => (
                  <button key={t} role="tab" aria-selected={t === 0} aria-label={["Modello", "Cartelle", "Preferiti"][t]} className="relative h-6 w-[39px]">
                    <svg viewBox="0 0 45 24" className="h-6 w-[45px] max-w-none">
                      <path d="M0 24V3Q0 1 2 1H28Q31 1 33 4L44 24z" fill={t === 0 ? "#f7fafd" : "#c3d9e9"} stroke={t === 0 ? "#b4c6d2" : "none"} />
                      {t === 0 && <path d="M13.500 3.500h4v4h-4zM13.500 9.500h4v4h-4zM13.500 15.500h4v4h-4zM21.500 9.500h4v4h-4zM15.500 7.500v2M15.500 13.500v2M18 11.500h3" fill="#fff" stroke={K} />}
                      {t === 1 && <g transform="translate(9 2)"><Folder x={0} y={0} /><Folder x={3} y={4} /><Folder x={6} y={8} /></g>}
                      {t === 2 && <g><path d="M10.500 7l2-2h4l2 2h8v12h-16z" fill="#f3e27a" stroke="#7a6a1c" /><path d="M18.500 9v7M15 12.500h7M16 10l5 5M21 10l-5 5" stroke="#26358c" /></g>}
                    </svg>
                  </button>
                ))}
              </div>
              <div className="flex min-h-0 flex-1 flex-col rounded-tr-[4px] border-r border-t border-[#b4c6d2] bg-linear-to-b from-[#f7fafd] to-[#e1edf4] pl-1.5 pr-1.5 pb-1">
                <div className="flex h-[27px] shrink-0 items-center pb-0.5 pl-[17px]">
                  <h2 className="text-[11px] font-bold">Albero modello</h2>
                  <button aria-label="Impostazioni" className="ml-auto flex items-center gap-1">
                    <svg viewBox="0 0 20 20" className="size-5"><path d="M1 7q3-5 8-4h4v3H9v3H6V7L2 9z" fill="#5e6a70" /><path d="M6 9h3v10H6z" fill="#d98a4a" /><path d="M12 1l2 4 2-4 2 3-2 5v10h-3V9z" fill="#8a9aa5" /><path d="M13 10h3v9h-3z" fill="#3858c0" /></svg>
                    <svg viewBox="0 0 7 4" className="h-1 w-[7px]"><path d="M0 0h7L3.500 4z" fill="#111" /></svg>
                  </button>
                  <button aria-label="Mostra" className="ml-1.5 flex items-center gap-1">
                    <svg viewBox="0 0 20 20" className="size-5"><path d="M4.500 1.500h9l4 4v13h-13z" fill="#fff" stroke="#6b757a" /><path d="M6 6h2M10 6h5M6 10h2M10 10h5M6 14h2M10 14h5" stroke={K} strokeWidth="1.200" /></svg>
                    <svg viewBox="0 0 7 4" className="h-1 w-[7px]"><path d="M0 0h7L3.500 4z" fill="#111" /></svg>
                  </button>
                </div>
                <div className="flex min-h-0 flex-1 flex-col overflow-hidden rounded-[4px] border-2 border-[#8fb0c3] border-b-[#a9c0ce] border-r-[#a9c0ce] bg-white">
                  <div className="flex h-[21px] shrink-0 border-b border-[#b9c9d4] bg-linear-to-b from-white to-[#e6eff5]">
                    <span className="flex-1" />
                    <span className="w-[18px] whitespace-nowrap border-l border-[#d0dae0] pl-0.5 text-[11px] font-bold leading-6">Ra</span>
                  </div>
                  <div className="flex min-h-0 flex-1">
                    <div className="min-w-0 flex-1"><Tree /></div>
                    <span className="w-[18px] border-l border-[#e3e8eb]" />
                  </div>
                  <div className="flex h-[18px] shrink-0 items-center gap-1 border-t border-[#c6d3db] px-1">
                    <Arrow d="M6 0v8L0 4z" c="#b9c6cd" />
                    <span className="flex-1" />
                    <Arrow d="M0 0v8l6-4z" c="#a9bac2" />
                    <span className="w-0.5" />
                    <Arrow d="M6 0v8L0 4z" c="#6f8c96" />
                    <Arrow d="M0 0v8l6-4z" c="#6f8c96" />
                  </div>
                </div>
              </div>
            </div>
            <div className="flex w-2 flex-col items-end pl-px pt-[121px]">
              <span className="flex h-[88px] w-full items-center justify-center rounded-l-[4px] border border-r-0 border-[#bdd0dc]"><i className="size-[3px] rounded-full bg-[#5c707c]" /></span>
              <span className="mt-2 flex h-[86px] w-full items-center justify-center rounded-l-[4px] border border-r-0 border-[#8ea6b6] bg-[#c3d7e3]"><i className="size-[3px] rounded-full bg-[#5c707c]" /></span>
            </div>
          </aside>

          <section className="relative min-w-0 flex-1 overflow-hidden bg-linear-to-b from-[#015a9b] via-[#023a6c] to-[#010b33]">
            <Scene />
            <Dialog />
          </section>

          <aside className="w-[76px] shrink-0 pt-[3px]">
            <div className="h-1 border-y border-dotted border-[#8798a4]" />
            <div className="flex gap-[15px] pt-[6px]">
              <div className="flex flex-col">{sideA.map((n) => <SideButton key={n} name={n} />)}</div>
              <div className="relative flex flex-col">
                {sideB.map((n) => <SideButton key={n} name={n} />)}
                <svg viewBox="0 0 4 6" className="absolute -left-2.5 top-[114px] h-1.5 w-1"><path d="M0 0l4 3-4 3z" fill="#333" /></svg>
              </div>
            </div>
            <div className="mt-1 h-[3px] w-9 border-y border-dotted border-[#8798a4]" />
            <div className="flex flex-col pt-[7px]">{sideC.map((n) => <SideButton key={n} name={n} />)}</div>
          </aside>
        </main>
      </div>
    </div>
  );
}
